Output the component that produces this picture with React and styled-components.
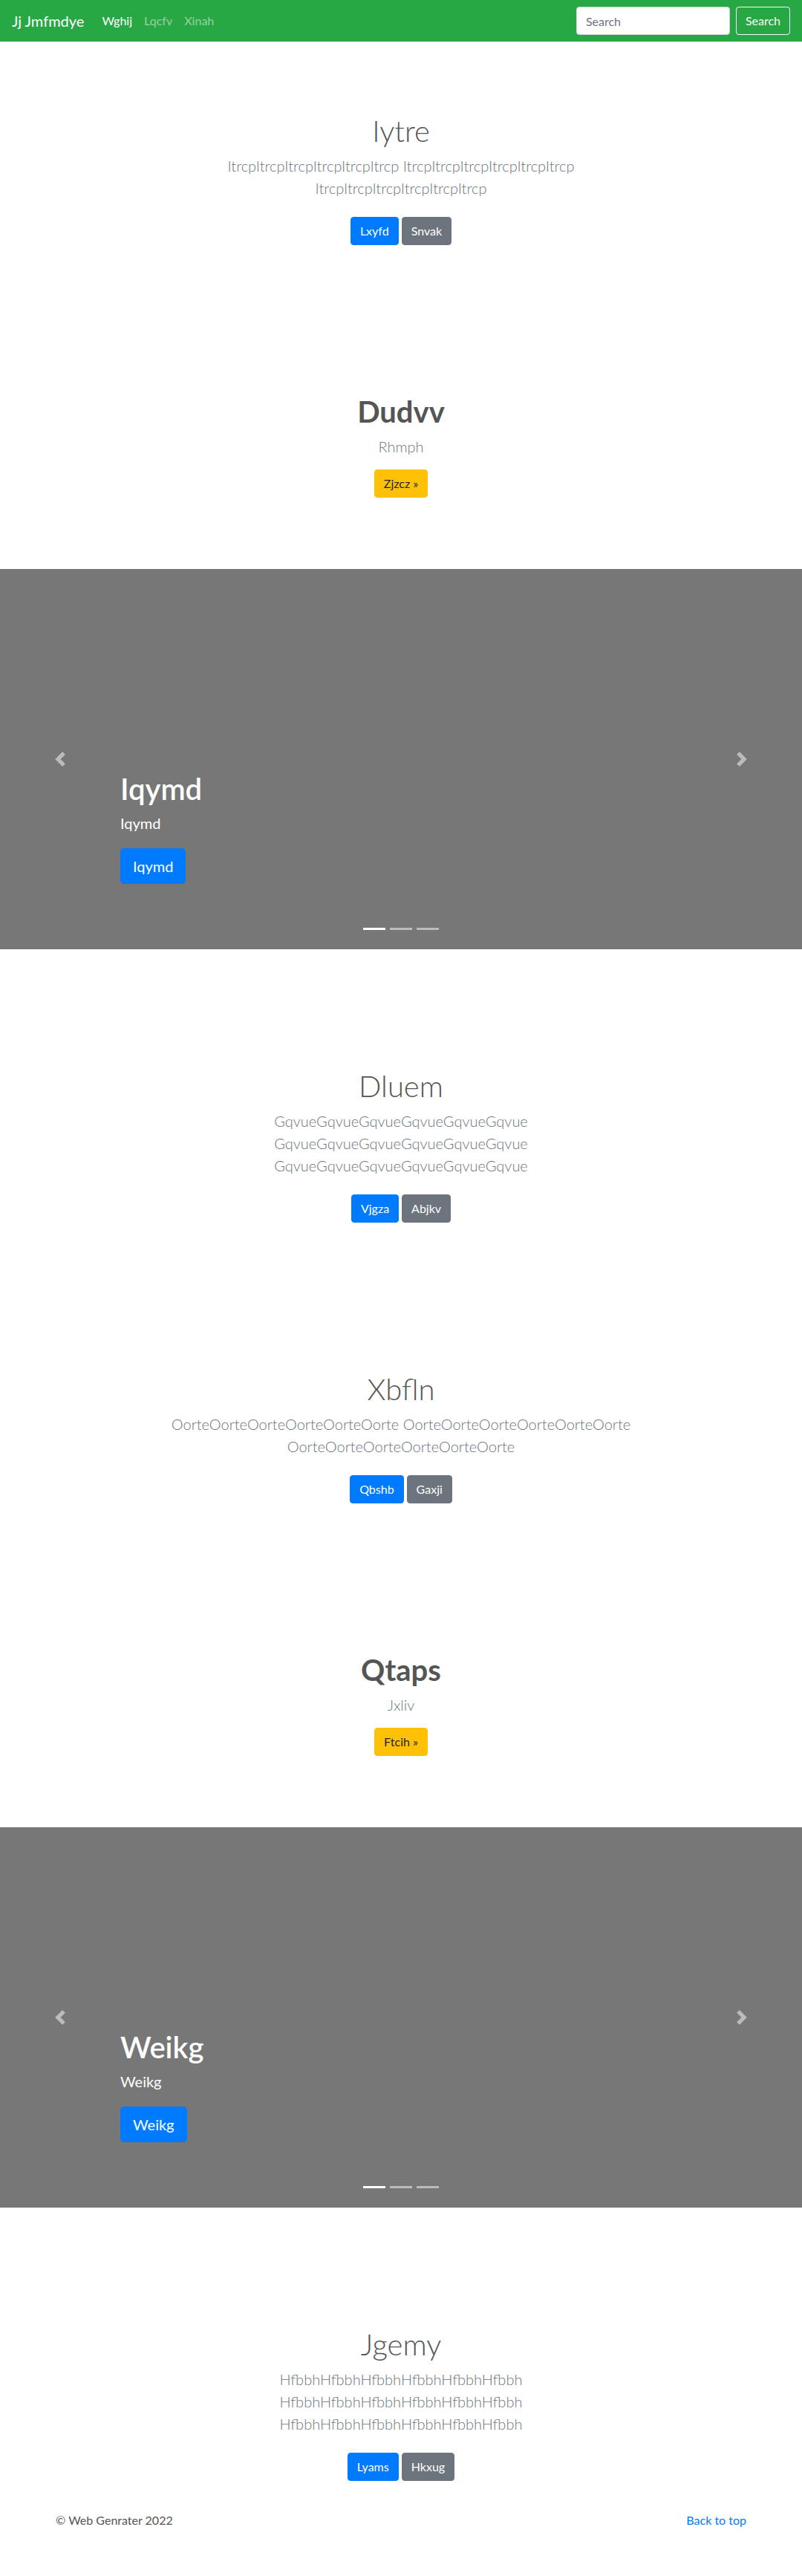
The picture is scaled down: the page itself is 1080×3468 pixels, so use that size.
import React from "react";
import styled, { createGlobalStyle } from "styled-components";

// page content, in order from top to bottom
const sections = [
  {
    kind: "album",
    title: "Iytre",
    text: "ItrcpItrcpItrcpItrcpItrcpItrcp ItrcpItrcpItrcpItrcpItrcpItrcp ItrcpItrcpItrcpItrcpItrcpItrcp",
    primary: "Lxyfd",
    secondary: "Snvak",
  },
  { kind: "hero", title: "Dudvv", lead: "Rhmph", action: "Zjzcz »" },
  { kind: "carousel", title: "Iqymd" },
  {
    kind: "album",
    title: "Dluem",
    text: "GqvueGqvueGqvueGqvueGqvueGqvue GqvueGqvueGqvueGqvueGqvueGqvue GqvueGqvueGqvueGqvueGqvueGqvue",
    primary: "Vjgza",
    secondary: "Abjkv",
  },
  {
    kind: "album",
    title: "Xbfln",
    text: "OorteOorteOorteOorteOorteOorte OorteOorteOorteOorteOorteOorte OorteOorteOorteOorteOorteOorte",
    primary: "Qbshb",
    secondary: "Gaxji",
  },
  { kind: "hero", title: "Qtaps", lead: "Jxliv", action: "Ftcih »" },
  { kind: "carousel", title: "Weikg" },
  {
    kind: "album",
    title: "Jgemy",
    text: "HfbbhHfbbhHfbbhHfbbhHfbbhHfbbh HfbbhHfbbhHfbbhHfbbhHfbbhHfbbh HfbbhHfbbhHfbbhHfbbhHfbbhHfbbh",
    primary: "Lyams",
    secondary: "Hkxug",
    last: true,
  },
];

const GlobalStyle = createGlobalStyle`
  *, *::before, *::after { box-sizing: border-box; }
  body {
    margin: 0;
    font-family: Lato, "Open Sans", "Liberation Sans", sans-serif;
    font-size: 16px;
    line-height: 1.5;
    color: #555;
    background: #fff;
  }
`;

//todo  ---- Navbar

const Navbar = styled.nav`
  display: flex;
  align-items: center;
  height: 56px;
  padding: 8px 16px;
  background: #28a745;
`;

const Brand = styled.a`
  margin-right: 16px;
  padding: 5px 0;
  font-size: 20px;
  line-height: 30px;
  color: #fff;
  text-decoration: none;
  white-space: nowrap;
`;

const NavList = styled.ul`
  display: flex;
  flex: 1;
  margin: 0;
  padding: 0;
  list-style: none;
`;

const NavLink = styled.a`
  display: block;
  padding: 8px;
  color: ${(p) => (p.$active ? "#fff" : "rgba(255, 255, 255, 0.5)")};
  text-decoration: none;
`;

const SearchForm = styled.form`
  display: flex;
  align-items: center;
`;

const SearchInput = styled.input`
  width: 207px;
  height: 38px;
  margin-right: 8px;
  padding: 6px 12px;
  font-family: inherit;
  font-size: 16px;
  line-height: 24px;
  color: #495057;
  background: #fff;
  border: 1px solid #ced4da;
  border-radius: 4px;

  &::placeholder {
    color: #6c757d;
  }
`;

const OutlineBtn = styled.button`
  height: 38px;
  padding: 6px 12px;
  font-family: inherit;
  font-size: 16px;
  line-height: 24px;
  color: #f8f9fa;
  background: transparent;
  border: 1px solid #f8f9fa;
  border-radius: 4px;
`;

//todo  ---- buttons

const variants = {
  primary: { bg: "#007bff", fg: "#fff" },
  secondary: { bg: "#6c757d", fg: "#fff" },
  warning: { bg: "#ffc107", fg: "#212529" },
};

const Btn = styled.a`
  display: inline-block;
  padding: ${(p) => (p.$lg ? "8px 16px" : "6px 12px")};
  font-size: ${(p) => (p.$lg ? 20 : 16)}px;
  line-height: ${(p) => (p.$lg ? 30 : 24)}px;
  font-weight: 400;
  color: ${(p) => variants[p.$variant].fg};
  background: ${(p) => variants[p.$variant].bg};
  border: 1px solid ${(p) => variants[p.$variant].bg};
  border-radius: ${(p) => (p.$lg ? "4.8px" : "4px")};
  text-decoration: none;
  white-space: nowrap;
`;

//todo  ---- jumbotron sections

const Jumbotron = styled.section`
  padding: 96px 0 ${(p) => (p.$last ? 0 : 96)}px;
  text-align: center;
`;

const Narrow = styled.div`
  max-width: 670px;
  margin: 0 auto;
  padding: 0 15px;
`;

const Title = styled.h1`
  margin: 0 0 8px;
  font-size: 40px;
  font-weight: ${(p) => (p.$bold ? 700 : 300)};
  line-height: 48px;
`;

const Lead = styled.p`
  margin: 0 0 16px;
  font-size: 20px;
  font-weight: 300;
  line-height: 30px;
  color: #6c757d;
`;

const Actions = styled.div`
  display: flex;
  justify-content: center;
  gap: 4px;
  padding: ${(p) => (p.$spaced ? "8px 0" : "0")};
`;

const Album = ({ title, text, primary, secondary, last }) => (
  <Jumbotron $last={last}>
    <Narrow>
      <Title>{title}</Title>
      <Lead>{text}</Lead>
      <Actions $spaced>
        <Btn href="#" $variant="primary">{primary}</Btn>
        <Btn href="#" $variant="secondary">{secondary}</Btn>
      </Actions>
    </Narrow>
  </Jumbotron>
);

const Hero = ({ title, lead, action }) => (
  <Jumbotron>
    <Narrow>
      <Title $bold>{title}</Title>
      <Lead>{lead}</Lead>
      <Actions>
        <Btn href="#" $variant="warning">{action}</Btn>
      </Actions>
    </Narrow>
  </Jumbotron>
);

//todo  ---- carousel

const CarouselBox = styled.div`
  position: relative;
  display: flex;
  flex-direction: column;
  justify-content: flex-end;
  height: 512px;
  margin-bottom: 64px;
  padding: 0 15% 48px;
  background: #777;
`;

const Caption = styled.div`
  position: relative;
  z-index: 2;
  padding: 20px 0;
  color: #fff;
  text-align: left;
`;

const CaptionTitle = styled.h1`
  margin: 0 0 8px;
  font-size: 40px;
  font-weight: 600;
  line-height: 48px;
`;

const CaptionText = styled.p`
  margin: 0 0 20px;
  font-size: 20px;
  line-height: 28px;
`;

const CaptionAction = styled.div`
  display: flex;
  margin-bottom: 20px;
`;

const Control = styled.a`
  position: absolute;
  top: 0;
  bottom: 0;
  ${(p) => p.$side}: 0;
  z-index: 1;
  display: flex;
  align-items: center;
  justify-content: center;
  width: 15%;
  opacity: 0.5;
`;

const Indicators = styled.ol`
  position: absolute;
  left: 0;
  right: 0;
  bottom: 0;
  z-index: 3;
  display: flex;
  justify-content: center;
  margin: 0 15% 16px;
  padding: 0;
  list-style: none;
`;

const Indicator = styled.li`
  box-sizing: content-box;
  width: 30px;
  height: 3px;
  margin: 0 3px;
  border-top: 10px solid transparent;
  border-bottom: 10px solid transparent;
  background: #fff;
  background-clip: padding-box;
  opacity: ${(p) => (p.$active ? 1 : 0.5)};
`;

const Chevron = ({ dir }) => (
  <svg width="20" height="20" viewBox="0 0 8 8" fill="#fff">
    {dir === "prev" ? (
      <path d="M5.25 0l-4 4 4 4 1.5-1.5L4.25 4l2.5-2.5L5.25 0z" />
    ) : (
      <path d="M2.75 0l-1.5 1.5L3.75 4l-2.5 2.5L2.75 8l4-4-4-4z" />
    )}
  </svg>
);

const Carousel = ({ title }) => (
  <CarouselBox>
    <Indicators>
      <Indicator $active />
      <Indicator />
      <Indicator />
    </Indicators>
    <Caption>
      <CaptionTitle>{title}</CaptionTitle>
      <CaptionText>{title}</CaptionText>
      <CaptionAction>
        <Btn href="#" $variant="primary" $lg>{title}</Btn>
      </CaptionAction>
    </Caption>
    <Control href="#" $side="left">
      <Chevron dir="prev" />
    </Control>
    <Control href="#" $side="right">
      <Chevron dir="next" />
    </Control>
  </CarouselBox>
);

//todo  ---- footer

const Footer = styled.footer`
  display: flex;
  justify-content: space-between;
  max-width: 960px;
  margin: 0 auto;
  padding: 33px 15px 45px;
`;

const FooterText = styled.p`
  margin: 0 0 16px;
`;

const FooterLink = styled.a`
  color: #007bff;
  text-decoration: none;
`;

export default function App() {
  return (
    <>
      <GlobalStyle />
      <Navbar>
        <Brand href="#">Jj Jmfmdye</Brand>
        <NavList>
          <li><NavLink href="#" $active>Wghij</NavLink></li>
          <li><NavLink href="#">Lqcfv</NavLink></li>
          <li><NavLink href="#">Xinah</NavLink></li>
        </NavList>
        <SearchForm onSubmit={(e) => e.preventDefault()}>
          <SearchInput type="text" placeholder="Search" />
          <OutlineBtn type="submit">Search</OutlineBtn>
        </SearchForm>
      </Navbar>

      <main>
        {sections.map((s) => {
          if (s.kind === "album") return <Album key={s.title} {...s} />;
          if (s.kind === "hero") return <Hero key={s.title} {...s} />;
          return <Carousel key={s.title} title={s.title} />;
        })}
      </main>

      <Footer>
        <FooterText>© Web Genrater 2022</FooterText>
        <FooterText>
          <FooterLink href="#">Back to top</FooterLink>
        </FooterText>
      </Footer>
    </>
  );
}
